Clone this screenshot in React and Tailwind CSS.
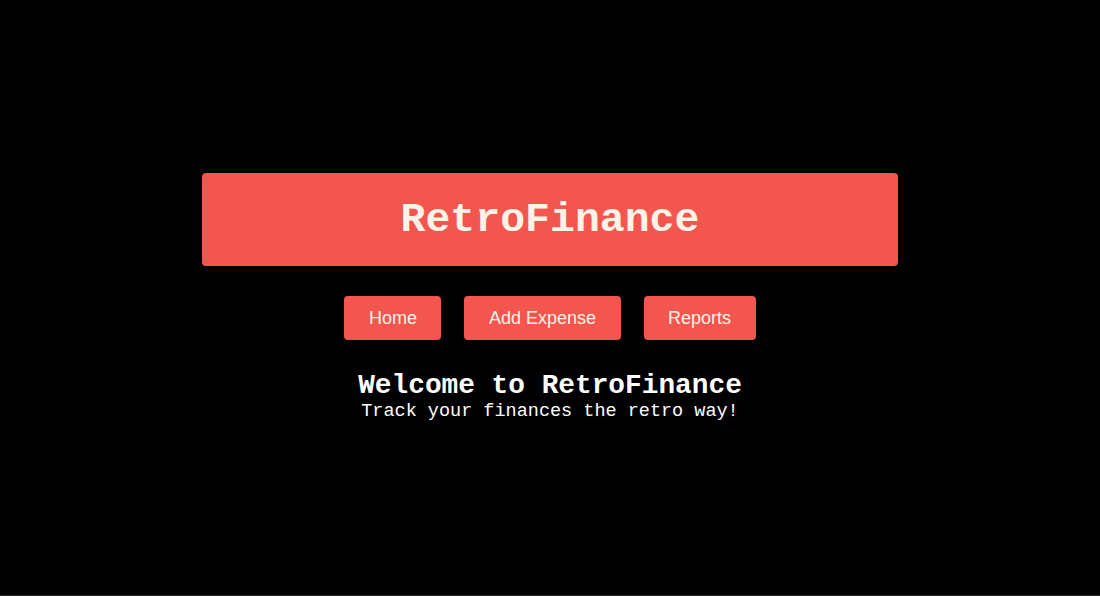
export default function App() {
  const mono = { fontFamily: '"Liberation Mono", "Courier New", monospace' };
  return (
    <div className="h-[596px] bg-black border-b border-[#2a2a2a] flex flex-col items-center text-white">
      <div className="h-[173px] shrink-0" />
      <header className="w-[696px] h-[93px] bg-[#f2564f] rounded-[4px] flex items-center justify-center">
        <h1 className="text-[41.5px] font-bold leading-none text-[#fdf3e7]" style={mono}>RetroFinance</h1>
      </header>
      <nav className="mt-[30px] flex gap-[23px]" style={{ fontFamily: '"Liberation Sans", Arial, sans-serif' }}>
        {["Home", "Add Expense", "Reports"].map((t) => (
          <button key={t} className="h-[44px] px-[24.5px] bg-[#f2564f] rounded-[4px] text-[18px] text-[#fdf3e7] leading-none">
            {t}
          </button>
        ))}
      </nav>
      <main className="mt-[32px] flex flex-col items-center" style={mono}>
        <h2 className="text-[27.8px] font-bold leading-[28px] text-white">Welcome to RetroFinance</h2>
        <p className="mt-[2px] text-[18.5px] leading-[20px] text-white">Track your finances the retro way!</p>
      </main>
    </div>
  );
}
